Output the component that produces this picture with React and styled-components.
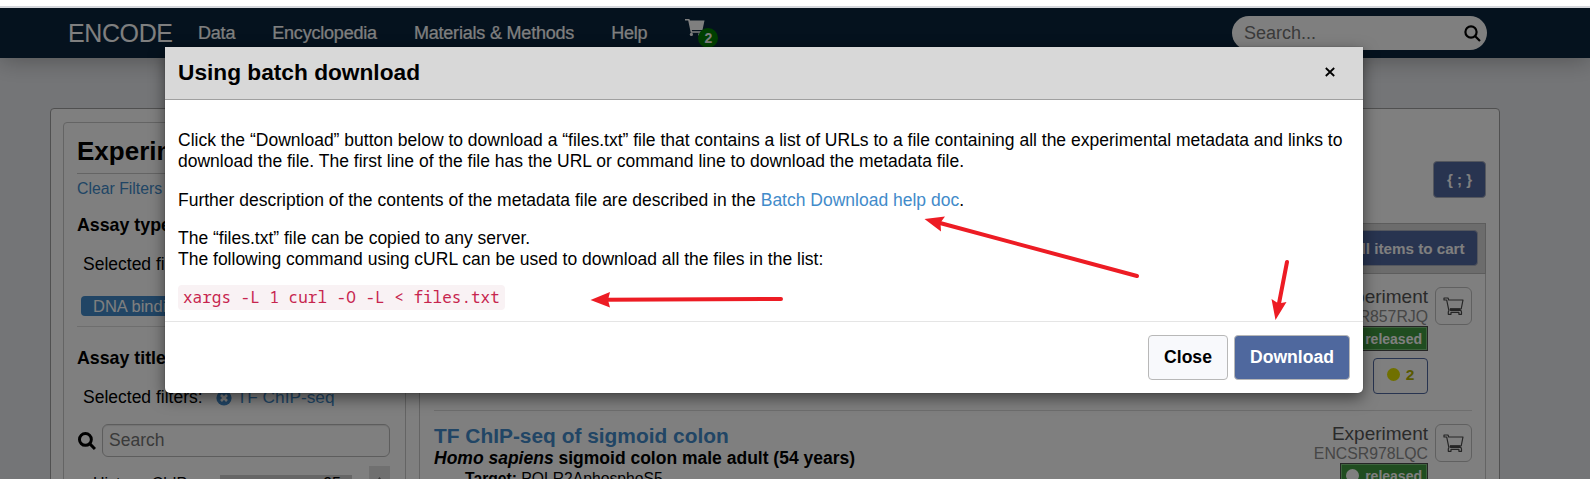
import React from 'react';
import styled, { createGlobalStyle } from 'styled-components';

const Global = createGlobalStyle`
  * { box-sizing: border-box; }
  body { margin: 0; overflow: hidden; background: #fff; font-family: "Liberation Sans", Arial, sans-serif; font-size: 17.5px; line-height: 21px; color: #000; }
`;

const Page = styled.div`
  position: relative;
  height: 479px;
  overflow: hidden;
  display: flex;
  flex-direction: column;
`;
const BrowserEdge = styled.div`
  flex: none;
  height: 8px;
  border-bottom: 2px solid #d5d7dc;
`;
const Site = styled.div`
  flex: 1;
  min-height: 0;
  overflow: hidden;
  background: #e9ebef;
`;
const NavBar = styled.header`
  height: 50px;
  display: flex;
  align-items: center;
  padding: 0 103px 0 68px;
  background: #0a253d;
  color: #fff;
  font-size: 18px;
  box-shadow: 0 2px 24px rgba(0, 0, 0, 0.3);
`;
const Brand = styled.div`
  width: 130px;
  font-size: 25px;
  letter-spacing: -0.4px;
`;
const NavItem = styled.a`
  margin-right: 37px;
  letter-spacing: -0.2px;
  -webkit-text-stroke: 0.2px #fff;
`;
const NavCart = styled.div`
  position: relative;
  width: 34px;
  height: 30px;
  margin-left: 1px;
  svg { display: block; }
`;
const CartCount = styled.span`
  position: absolute;
  left: 13px;
  top: 10px;
  width: 20px;
  height: 20px;
  border-radius: 50%;
  background: #008000;
  font-weight: 700;
  font-size: 14px;
  line-height: 20px;
  text-align: center;
`;
const NavSearch = styled.div`
  margin-left: auto;
  width: 255px;
  height: 34px;
  border-radius: 17px;
  padding: 0 6px 0 12px;
  display: flex;
  align-items: center;
  justify-content: space-between;
  background: #fff;
  color: #757575;
`;

const Panel = styled.main`
  margin: 50px 90px 0 50px;
  height: 500px;
  padding: 13px 13px 13px 12px;
  display: flex;
  gap: 13px;
  align-items: flex-start;
  background: #fff;
  border: 1px solid #a0a0a0;
  border-radius: 4px;
`;
const Facets = styled.aside`
  width: 343px;
  height: 480px;
  padding: 0 14px 0 13px;
  border: 1px solid #c8c8c8;
  border-radius: 4px;
`;
const FacetHeading = styled.h1`
  margin: 0;
  height: 51px;
  padding-top: 14px;
  font-size: 26px;
  line-height: 28px;
  border-bottom: 1px solid #c8c8c8;
  white-space: nowrap;
`;
const Clear = styled.a`
  display: block;
  padding-top: 4px;
  font-size: 15.8px;
  color: #428bca;
`;
const Facet = styled.section`
  height: ${p => p.$height}px;
  padding-top: ${p => p.$top}px;
  border-bottom: 1px solid #ddd;
`;
const FacetTitle = styled.h2`
  margin: 0 0 18px;
  font-size: 17.8px;
  line-height: 21px;
`;
const Selected = styled.div`
  padding-left: 6px;
  display: flex;
  align-items: center;
  a { display: flex; align-items: center; gap: 5px; margin-left: 13px; font-size: 17.3px; color: #428bca; }
`;
const Term = styled.div`
  margin: 21px 4px 0;
  height: 20px;
  padding-left: 12px;
  border-radius: 4px;
  background: #428bca;
  color: #fff;
  font-size: 16.5px;
  line-height: 20px;
`;
const TermSearch = styled.div`
  margin-top: 16px;
  padding-left: 1px;
  display: flex;
  align-items: center;
  gap: 6px;
`;
const TermInput = styled.div`
  width: 288px;
  height: 33px;
  padding: 5px 6px;
  border: 1px solid #bbb;
  border-radius: 6px;
  color: #757575;
  box-shadow: inset 0 1px 1px rgba(0, 0, 0, 0.1);
`;
const TermList = styled.div`
  margin-top: 9px;
  padding-left: 1px;
  display: flex;
  align-items: flex-start;
`;
const TermName = styled.span`
  width: 142px;
  padding: 7px 0 0 15px;
  font-size: 16px;
  white-space: nowrap;
`;
const TermBar = styled.span`
  width: 132px;
  height: 25px;
  margin-top: 9px;
  padding: 0 11px 0 0;
  text-align: right;
  font-size: 16px;
  line-height: 17px;
  background: #ccc;
`;
const ScrollArrow = styled.span`
  margin-left: 17px;
  width: 21px;
  height: 30px;
  padding: 1px 0 0 6px;
  background: #e0e0e0;
`;

const Results = styled.section`
  flex: 1;
  height: 480px;
  display: flex;
  flex-direction: column;
`;
const ResultsTop = styled.div`
  height: 101px;
  padding-top: 39px;
  display: flex;
  justify-content: flex-end;
  align-items: flex-start;
`;
const BlueButton = styled.button`
  width: ${p => p.$width}px;
  height: ${p => p.$height}px;
  padding: 0;
  border: 1px solid #a9aebd;
  border-radius: 4px;
  background: #5068a0;
  color: #fff;
  font: 700 ${p => p.$size}px "Liberation Sans", Arial, sans-serif;
`;
const ResultsBar = styled.div`
  height: 51px;
  display: flex;
  justify-content: flex-end;
  align-items: flex-start;
  padding: 6px 7px 0;
  background: #d8d8d8;
  border: 1px solid #bbb;
`;
const ResultList = styled.div`
  flex: 1;
  padding: 0 13px 0 14px;
  border: 1px solid #c8c8c8;
  border-top: 0;
`;
const Result = styled.article`
  height: 137px;
  padding-top: 13px;
  display: flex;
  justify-content: space-between;
  border-bottom: 1px solid #ddd;
`;
const Summary = styled.div`
  white-space: nowrap;
`;
const ResultTitle = styled.div`
  font-size: 20.9px;
  line-height: 24px;
  font-weight: 700;
  color: #428bca;
`;
const Biosample = styled.div`
  font-weight: 700;
  line-height: 20px;
`;
const Detail = styled.div`
  padding: ${p => p.$top || 0}px 0 0 31px;
  font-size: 15.7px;
  line-height: 21px;
`;
const Meta = styled.div`
  display: flex;
  gap: 7px;
`;
const MetaText = styled.div`
  display: flex;
  flex-direction: column;
  align-items: flex-end;
  line-height: 20px;
  font-size: 19px;
  color: #555;
  small { font-size: 15.8px; line-height: 19px; color: #8c8c8c; }
`;
const Status = styled.span`
  width: 88px;
  height: 25px;
  padding: 0 5px;
  display: flex;
  align-items: center;
  justify-content: space-between;
  border: 1px solid #4a4a4a;
  box-shadow: inset 0 0 0 1px #7cc47c;
  background: #409a40;
  color: #fff;
  font-weight: 700;
  font-size: 14px;
`;
const Dot = styled.i`
  width: 13px;
  height: 13px;
  border-radius: 50%;
  background: ${p => p.$color};
`;
const Audit = styled.span`
  width: 55px;
  height: 36px;
  margin-top: 7px;
  display: flex;
  align-items: center;
  justify-content: center;
  gap: 6px;
  padding-bottom: 3px;
  border: 1px solid #5068a0;
  border-radius: 4px;
  color: #b3b300;
  font-weight: 700;
  font-size: 15.5px;
`;
const CartToggle = styled.span`
  width: 37px;
  height: 38px;
  display: flex;
  align-items: center;
  justify-content: center;
  border: 1px solid #c0c0c0;
  border-radius: 6px;
`;

const Backdrop = styled.div`
  position: absolute;
  inset: 8px 0 0;
  display: flex;
  align-items: flex-start;
  padding: 39px 0 0 165px;
  background: rgba(0, 0, 0, 0.5);
`;
const Dialog = styled.div`
  width: 1198px;
  height: 346px;
  display: flex;
  flex-direction: column;
  background: #fff;
  border-radius: 0 0 5px 5px;
  box-shadow: 0 5px 15px rgba(0, 0, 0, 0.5), 0 0 1px rgba(0, 0, 0, 0.6);
`;
const DialogHeader = styled.div`
  flex: none;
  height: 53px;
  padding: 0 27px 3px 13px;
  display: flex;
  align-items: center;
  justify-content: space-between;
  background: #d8d8d8;
  border-bottom: 1px solid #a0a0a0;
`;
const DialogTitle = styled.h2`
  margin: 0;
  font-size: 22.7px;
  line-height: 28px;
`;
const DialogBody = styled.div`
  flex: 1;
  padding: 30px 13px 0;
  p { margin: 0 0 17.5px; white-space: nowrap; }
  p:last-of-type { margin-bottom: 15px; }
  a { color: #428bca; }
`;
const Command = styled.code`
  display: block;
  width: fit-content;
  height: 25px;
  padding: 2px 5px;
  border-radius: 4px;
  background: #f9f2f4;
  color: #c7254e;
  font-family: "Noto Sans Mono", "DejaVu Sans Mono", monospace;
  font-size: 16px;
`;
const DialogFooter = styled.div`
  flex: none;
  height: 72px;
  padding: 13px 13px 0;
  display: flex;
  justify-content: flex-end;
  gap: 6px;
  border-top: 1px solid #e5e5e5;
`;
const ActionButton = styled.button`
  width: ${p => p.$width}px;
  height: 45px;
  padding: 0;
  border: 1px solid #b8b8b8;
  border-radius: 4px;
  background: ${p => (p.$primary ? '#4f689e' : '#f8f9fc')};
  color: ${p => (p.$primary ? '#fff' : '#000')};
  font: 700 17.6px "Liberation Sans", Arial, sans-serif;
`;
const Annotations = styled.svg`
  position: absolute;
  inset: 0;
`;

const SearchIcon = ({ size = 17, weight = 2.2 }) => (
  <svg width={size} height={size} viewBox="0 0 17 17" fill="none" stroke="#000" strokeWidth={weight}>
    <circle cx="7" cy="7" r="5.6" />
    <path d="M11 11l5 5" />
  </svg>
);
const SolidCart = () => (
  <svg width="20" height="19" viewBox="0 0 20 19" fill="#fff">
    <path d="M0 1h4.3l.8 1.6H19.500l-2 9.300H6.800l.3 1.400h9v1.400H5.800L3.200 2.600H0z" />
    <circle cx="6.4" cy="16.4" r="1.6" />
    <circle cx="14.8" cy="16.4" r="1.6" />
  </svg>
);
const OutlineCart = () => (
  <svg width="21" height="19" viewBox="0 0 21 19" fill="none" stroke="#4a4a4a" strokeWidth="1.2" strokeLinejoin="round">
    <path d="M1 1h4l.7 2H20l-1.8 9H7.2l.4 1.4H17c1 0 1.500.7 1.500 1.500v2.400h-2.600v-2H8v2H5.300v-2.600l.6-1L3.700 3H1z" />
    <path d="M7 11.800h10.500M7.400 13.200h10" strokeWidth="1.3" />
  </svg>
);
const Remove = () => (
  <svg width="16" height="16" viewBox="0 0 16 16">
    <circle cx="8" cy="8" r="7.6" fill="#428bca" />
    <path d="M5 5l6 6M11 5l-6 6" stroke="#fff" strokeWidth="2.6" />
  </svg>
);

const ResultMeta = ({ accession, audit }) => (
  <Meta>
    <MetaText>
      Experiment
      <small>{accession}</small>
      <Status><Dot $color="#fff" />released</Status>
      {audit && <Audit><Dot $color="#e0e000" />{audit}</Audit>}
    </MetaText>
    <CartToggle><OutlineCart /></CartToggle>
  </Meta>
);

export default function App() {
  return (
    <Page>
      <Global />
      <BrowserEdge />
      <Site>
        <NavBar>
          <Brand>ENCODE</Brand>
          <NavItem>Data</NavItem>
          <NavItem>Encyclopedia</NavItem>
          <NavItem>Materials &amp; Methods</NavItem>
          <NavItem>Help</NavItem>
          <NavCart><SolidCart /><CartCount>2</CartCount></NavCart>
          <NavSearch>Search...<SearchIcon /></NavSearch>
        </NavBar>
        <Panel>
          <Facets>
            <FacetHeading>Experiment search</FacetHeading>
            <Clear>Clear Filters</Clear>
            <Facet $height={128} $top={16}>
              <FacetTitle>Assay type</FacetTitle>
              <Selected>Selected filters:</Selected>
              <Term>DNA binding</Term>
            </Facet>
            <Facet $height={220} $top={21}>
              <FacetTitle>Assay title</FacetTitle>
              <Selected>Selected filters: <a><Remove />TF ChIP-seq</a></Selected>
              <TermSearch><SearchIcon size={18} weight={2.8} /><TermInput>Search</TermInput></TermSearch>
              <TermList>
                <TermName>Histone ChIP-seq</TermName>
                <TermBar>95</TermBar>
                <ScrollArrow>
                  <svg width="9" height="6" viewBox="0 0 9 6"><path d="M4.500 0l4.500 6H0z" fill="#777" /></svg>
                </ScrollArrow>
              </TermList>
            </Facet>
          </Facets>
          <Results>
            <ResultsTop><BlueButton $width={53} $height={37} $size={15}>{'{ ; }'}</BlueButton></ResultsTop>
            <ResultsBar><BlueButton $width={172} $height={36} $size={15.2}>Add all items to cart</BlueButton></ResultsBar>
            <ResultList>
              <Result>
                <Summary><Detail $top={84}>Project: ENCODE</Detail></Summary>
                <ResultMeta accession="ENCSR857RJQ" audit="2" />
              </Result>
              <Result>
                <Summary>
                  <ResultTitle>TF ChIP-seq of sigmoid colon</ResultTitle>
                  <Biosample><em>Homo sapiens</em> sigmoid colon male adult (54 years)</Biosample>
                  <Detail><b>Target:</b> POLR2AphosphoS5</Detail>
                </Summary>
                <ResultMeta accession="ENCSR978LQC" />
              </Result>
            </ResultList>
          </Results>
        </Panel>
      </Site>
      <Backdrop>
        <Dialog>
          <DialogHeader>
            <DialogTitle>Using batch download</DialogTitle>
            <svg width="12" height="12" viewBox="0 0 12 12" stroke="#000" strokeWidth="1.8"><path d="M1.800 2l8.400 8M10.200 2l-8.400 8" /></svg>
          </DialogHeader>
          <DialogBody>
            <p>Click the “Download” button below to download a “files.txt” file that contains a list of URLs to a file containing all the experimental metadata and links to<br />download the file. The first line of the file has the URL or command line to download the metadata file.</p>
            <p>Further description of the contents of the metadata file are described in the <a>Batch Download help doc</a>.</p>
            <p>The “files.txt” file can be copied to any server.<br />The following command using cURL can be used to download all the files in the list:</p>
            <Command>xargs -L 1 curl -O -L &lt; files.txt</Command>
          </DialogBody>
          <DialogFooter>
            <ActionButton $width={80}>Close</ActionButton>
            <ActionButton $width={116} $primary>Download</ActionButton>
          </DialogFooter>
        </Dialog>
      </Backdrop>
      <Annotations width="1590" height="479" fill="#ed1c24" stroke="#ed1c24" strokeWidth="4" strokeLinecap="round">
        <path d="M1137 276L940 223M781 299L606 299.800M1287 262L1278.500 306" fill="none" />
        <path stroke="none" d="M924.500 219l20.500-2.500-4.500 6 .5 9zM590.500 300l19.500-8-2 8 2 7.500zM1275.500 320l-4-21 7 4.500 8-1.500z" />
      </Annotations>
    </Page>
  );
}
